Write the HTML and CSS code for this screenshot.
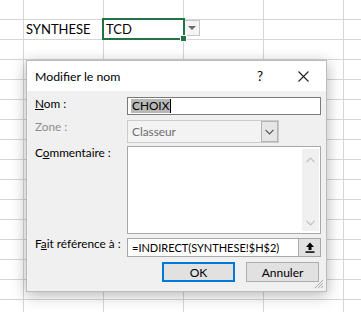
FILE: index.html
```html
<!DOCTYPE html>
<html lang="fr">
<head>
    <meta charset="UTF-8">
    <title>Modifier le nom</title>
    <link rel="stylesheet" href="styles.css">
</head>
<body>
    <div class="sheet">
        <div class="row">
            <div class="cell first"></div>
            <div class="cell">SYNTHESE</div>
            <div class="cell active">TCD<span class="handle"></span></div>
            <span class="ddBtn">
                <svg width="8" height="5" viewBox="0 0 8 5"><path d="M0 0H8L4 4Z" fill="#6b6b6b"/></svg>
            </span>
        </div>
    </div>

    <div class="dialog">
        <div class="titleBar">
            <span class="title">Modifier le nom</span>
            <span class="help">?</span>
            <span class="close">
                <svg width="11" height="11" viewBox="0 0 11 11"><path d="M0.5 0.5L10.5 10.5M10.5 0.5L0.5 10.5" stroke="#222" stroke-width="1.1"/></svg>
            </span>
        </div>

        <div class="body">
            <div class="field fName">
                <label class="lbl"><u>N</u>om :</label>
                <div class="box nameBox"><span class="sel">CHOIX</span><span class="caret"></span></div>
            </div>
            <div class="field fZone">
                <label class="lbl off">Zone :</label>
                <div class="box zoneBox">
                    <span class="zoneText">Classeur</span>
                    <span class="zoneBtn">
                        <svg width="9" height="6" viewBox="0 0 9 6"><path d="M0.5 0.8L4.5 4.8L8.5 0.8" fill="none" stroke="#555" stroke-width="1.2"/></svg>
                    </span>
                </div>
            </div>
            <div class="field fComment">
                <label class="lbl">C<u>o</u>mmentaire :</label>
                <div class="box commentBox">
                    <div class="scroll">
                        <svg width="9" height="6" viewBox="0 0 9 6"><path d="M0.5 5.2L4.5 1.2L8.5 5.2" fill="none" stroke="#bdbdbd" stroke-width="1.2"/></svg>
                        <svg width="9" height="6" viewBox="0 0 9 6"><path d="M0.5 0.8L4.5 4.8L8.5 0.8" fill="none" stroke="#bdbdbd" stroke-width="1.2"/></svg>
                    </div>
                </div>
            </div>
            <div class="field fRef">
                <label class="lbl">F<u>a</u>it référence à :</label>
                <div class="box refBox">
                    <span class="refText">=INDIRECT(SYNTHESE!$H$2)</span>
                    <span class="refBtn">
                        <svg width="10" height="11" viewBox="0 0 10 11"><path d="M5 0.5L9 5H6.5V8H3.5V5H1Z" fill="#000"/><rect x="0.5" y="9.3" width="9" height="1.5" fill="#000"/></svg>
                    </span>
                </div>
            </div>
            <div class="buttons">
                <button class="btn ok">OK</button>
                <button class="btn">Annuler</button>
            </div>
        </div>

        <svg class="grip" width="10" height="10" viewBox="0 0 10 10">
            <path d="M9 1L1 9M9 4L4 9M9 7L7 9" stroke="#a8a8a8" stroke-width="1"/>
        </svg>
    </div>
</body>
</html>
```

FILE: styles.css
```css
body{
    margin: 0;
    width: 361px;
    height: 312px;
    overflow: hidden;
    background-color: #fff;
    background-image:
        linear-gradient(to right, #d6d6d6 1px, transparent 1px),
        linear-gradient(to bottom, #d6d6d6 1px, transparent 1px);
    background-size: 80px 100%, 100% 20px;
    background-position: 23px 0, 0 19px;
    font-family: Lato, "Liberation Sans", sans-serif;
}

/* feuille */
.sheet{
    padding-top: 20px;
}
.row{
    display: flex;
    height: 19px;
}
.cell{
    width: 80px;
    padding-left: 3px;
    box-sizing: border-box;
    font-size: 13px;
    line-height: 19px;
    color: #000;
    position: relative;
    white-space: nowrap;
}
.cell.first{
    width: 23px;
}
.active::after{
    content: '';
    position: absolute;
    left: -1px;
    top: -2px;
    right: -2px;
    bottom: -1px;
    border: 2px solid #217346;
}
.handle{
    position: absolute;
    right: -4px;
    bottom: -3px;
    width: 5px;
    height: 5px;
    background: #217346;
    border: 1px solid #fff;
    z-index: 2;
}
.ddBtn{
    width: 16px;
    height: 16px;
    margin-left: 1px;
    box-sizing: border-box;
    border: 1px solid #c6c6c6;
    background: #f4f4f4;
    display: flex;
    align-items: center;
    justify-content: center;
}

/* boite de dialogue */
.dialog{
    position: absolute;
    left: 26px;
    top: 60px;
    width: 301px;
    height: 232px;
    box-sizing: border-box;
    border: 1px solid #bdbdbd;
    background: #f0f0f0;
    box-shadow: 0 3px 14px rgba(0,0,0,.3);
    font-family: Lato, "Noto Sans", sans-serif;
    font-size: 11.8px;
    color: #000;
}
.titleBar{
    height: 30px;
    background: #fff;
    display: flex;
    align-items: center;
    padding-left: 8px;
}
.title{
    flex: 1;
    font-size: 12.3px;
}
.help{
    width: 14px;
    text-align: center;
    margin-right: 31px;
    font-size: 13.5px;
}
.close{
    width: 11px;
    height: 11px;
    margin-right: 17px;
    display: flex;
}
.body{
    padding: 6px 5px 0 8px;
}
.field{
    display: flex;
}
.lbl{
    width: 92px;
    flex: none;
    line-height: 16px;
    white-space: nowrap;
}
.lbl.off{
    color: #8d8d8d;
}
.box{
    width: 194px;
    box-sizing: border-box;
    border: 1px solid #7a7a7a;
    background: #fff;
    display: flex;
    align-items: center;
}
.fName .box{
    height: 18px;
    padding-left: 3px;
}
.fName .lbl{
    margin-top: -1px;
}
.sel{
    background: #b8b8b8;
    line-height: 14px;
    padding: 0 1px;
}
.caret{
    width: 1px;
    height: 14px;
    background: #000;
}
.fZone{
    margin-top: 5px;
}
.fZone .lbl{
    margin-top: -1px;
}
.zoneBox{
    width: 152px;
    height: 23px;
    border-color: #cbcbcb;
    background: #f3f3f3;
}
.zoneText{
    flex: 1;
    padding-left: 4px;
    color: #6d6d6d;
}
.zoneBtn{
    width: 17px;
    height: 21px;
    box-sizing: border-box;
    border: 1px solid #b4b4b4;
    background: #e6e6e6;
    display: flex;
    align-items: center;
    justify-content: center;
}
.fComment{
    margin-top: 3px;
}
.fComment .lbl{
    margin-top: -1px;
}
.commentBox{
    height: 88px;
    border-color: #a8a8a8;
    justify-content: flex-end;
    align-items: stretch;
    padding: 2px 1px;
}
.scroll{
    width: 17px;
    background: #f0f0f0;
    display: flex;
    flex-direction: column;
    justify-content: space-between;
    align-items: center;
    padding: 8px 0 5px;
}
.fRef{
    margin-top: 4px;
}
.fRef .lbl{
    margin-top: -2px;
}
.refBox{
    height: 19px;
    border-color: #a8a8a8;
}
.refText{
    flex: 1;
    padding-left: 4px;
    white-space: nowrap;
    font-size: 11px;
}
.refBtn{
    width: 22px;
    height: 17px;
    box-sizing: border-box;
    border-left: 1px solid #adadad;
    background: #e1e1e1;
    display: flex;
    align-items: center;
    justify-content: center;
}
.buttons{
    display: flex;
    justify-content: flex-end;
    gap: 11px;
    margin-top: 5px;
    padding-right: 2px;
}
.btn{
    width: 73px;
    height: 20px;
    box-sizing: border-box;
    border: 1px solid #adadad;
    background: #e1e1e1;
    font-family: inherit;
    font-size: 12px;
    color: #000;
    padding: 0;
}
.btn.ok{
    border: 2px solid #0078d7;
}
.grip{
    position: absolute;
    right: 2px;
    bottom: 2px;
}
```
